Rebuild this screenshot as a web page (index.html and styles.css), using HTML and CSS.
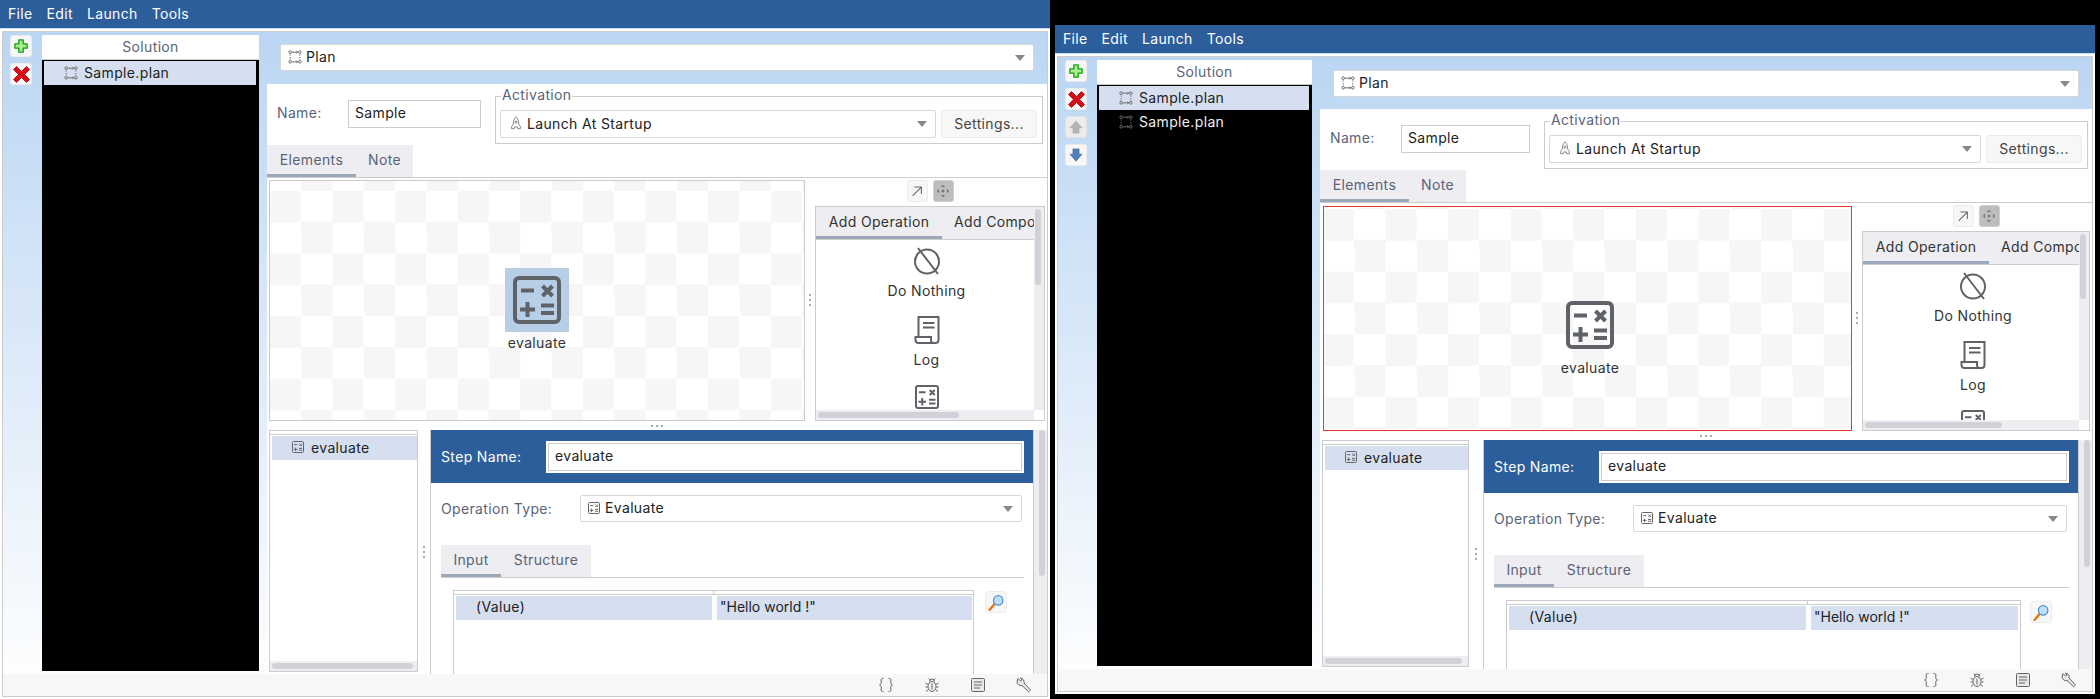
FILE: index.html

```html
<!DOCTYPE html>
<html lang="en">
<head>
  <meta charset="UTF-8">
  <title>Solution</title>
  <link rel="stylesheet" href="styles.css">
</head>
<body>

  <svg class="defs" xmlns="http://www.w3.org/2000/svg">
    <symbol id="i-plan" viewBox="0 0 16 16">
      <g fill="none" stroke="#6b6b6b" stroke-width="1.1">
        <circle cx="2.5" cy="2.5" r="1.5"/><circle cx="13.5" cy="2.5" r="1.5"/>
        <circle cx="2.5" cy="13.5" r="1.5"/><circle cx="13.5" cy="13.5" r="1.5"/>
        <path d="M4.5 2.5h6.5M9.5 1l1.5 1.5L9.5 4M4.5 13.5h6.5M9.5 12l1.5 1.5L9.5 15M2.5 5v1.5M2.5 8v1.5M2.5 10.5v.8M13.5 5v1.5M13.5 8v1.5M13.5 10.5v.8"/>
      </g>
    </symbol>
    <symbol id="i-calc" viewBox="0 0 48 48">
      <rect x="2" y="2" width="44" height="44" rx="4" fill="none" stroke="currentColor" stroke-width="4"/>
      <path d="M8 14.5h13M29.5 10l10 10M39.5 10l-10 10M14.5 26v15M7 33.5h15M28 29.5h13M28 37h13" fill="none" stroke="currentColor" stroke-width="4"/>
    </symbol>
    <symbol id="i-rocket" viewBox="0 0 16 16">
      <path d="M8 1c2.4 2 3 5 3 8l2 3v2.500h-3l-.5-2h-3l-.5 2H3V12l2-3c0-3 .6-6 3-8z" fill="none" stroke="#777" stroke-width="1"/>
      <circle cx="8" cy="7" r="1.200" fill="none" stroke="#777"/>
    </symbol>
    <symbol id="i-plus" viewBox="0 0 16 16">
      <path d="M5.500 1h5v4.500H15v5h-4.500V15h-5v-4.500H1v-5h4.500z" fill="#a4ec8c" stroke="#12a012" stroke-width="1.500" stroke-linejoin="round"/>
    </symbol>
    <symbol id="i-cross" viewBox="0 0 17 17">
      <path d="M3.500 .5L8.500 5.500 13.500 .5 16.500 3.500 11.500 8.500 16.500 13.500 13.500 16.500 8.500 11.500 3.500 16.500 .5 13.500 5.500 8.500 .5 3.500z" fill="#dc0a14" stroke="#a80010" stroke-width=".8"/>
    </symbol>
    <symbol id="i-up" viewBox="0 0 16 16">
      <path d="M8 1l7 8h-3.500v6h-7V9H1z" fill="#b4b4b4" stroke="#a8a8a8" stroke-width=".6"/>
    </symbol>
    <symbol id="i-down" viewBox="0 0 16 16">
      <path d="M4.500 1h7v6H15l-7 8-7-8h3.500z" fill="#4f7fbc" stroke="#2f5a96" stroke-width=".6"/>
    </symbol>
    <symbol id="i-link" viewBox="0 0 16 16">
      <path d="M3 13.500L13 3.500M5 3.500h8v8" fill="none" stroke="#666" stroke-width="1.200"/>
    </symbol>
    <symbol id="i-move" viewBox="0 0 16 16">
      <path d="M8 1l2.500 2.500h-5zM8 15l-2.500-2.500h5zM1 8l2.500-2.500v5zM15 8l-2.500 2.500v-5zM8 6l2 2-2 2-2-2z" fill="#777"/>
    </symbol>
    <symbol id="i-none" viewBox="0 0 28 28">
      <circle cx="14" cy="14.500" r="12" fill="none" stroke="#5f6368" stroke-width="2"/>
      <path d="M5 1l20 26" fill="none" stroke="#5f6368" stroke-width="2"/>
    </symbol>
    <symbol id="i-log" viewBox="0 0 25 28">
      <path d="M4 21V1h20v23a3 3 0 0 1-3 3H4a3 3 0 0 1-3-3v-3h15.500v3a3 3 0 0 0 4 3M8.500 7h11.500M8.500 11.500h11.500" fill="none" stroke="#5f6368" stroke-width="2"/>
    </symbol>
    <symbol id="i-search" viewBox="0 0 20 20">
      <path d="M2 18.500l6-7" fill="none" stroke="#e07a1c" stroke-width="3" stroke-linecap="round"/>
      <circle cx="12" cy="7.500" r="5.500" fill="#bfe0fa" stroke="#4f8fd0" stroke-width="1.500"/>
    </symbol>
    <symbol id="i-braces" viewBox="0 0 16 16">
      <path d="M5.500 1.500H4.500c-1 0-1.300.6-1.300 1.500v3c0 1-.6 1.700-1.700 2 1.100.3 1.700 1 1.700 2v3c0 .9.3 1.500 1.300 1.500h1M10.500 1.500h1c1 0 1.300.6 1.300 1.500v3c0 1 .6 1.700 1.700 2-1.100.3-1.700 1-1.700 2v3c0 .9-.3 1.500-1.300 1.500h-1" fill="none" stroke="#666" stroke-width="1"/>
    </symbol>
    <symbol id="i-bug" viewBox="0 0 16 16">
      <ellipse cx="8" cy="9.500" rx="4" ry="5" fill="#eee" stroke="#666"/>
      <path d="M5.500 4.500a2.500 2.500 0 0 1 5 0M5 1.500l1.500 2M11 1.500l-1.500 2M4 7.500L1.500 6M12 7.500L14.500 6M3.800 10H1.500M12.200 10h2.300M4.500 12.500l-2.500 2M11.500 12.500l2.500 2M8 6.500v6" fill="none" stroke="#666"/>
    </symbol>
    <symbol id="i-doc" viewBox="0 0 16 16">
      <rect x="1.500" y="1.500" width="13" height="13" rx="1" fill="#e8e8e8" stroke="#666"/>
      <path d="M4 5h8M4 8h8M4 11h6" fill="none" stroke="#666"/>
    </symbol>
    <symbol id="i-wrench" viewBox="0 0 16 16">
      <path d="M2 1.500L4.500 4 6 3 4.500 1a4 4 0 0 1 3.500 5l6.500 7-1.800 1.800L6 8.500A4 4 0 0 1 1 5z" fill="#e8e8e8" stroke="#666" stroke-linejoin="round"/>
    </symbol>
  </svg>

  <!-- first window -->
  <div class="window win-a">
    <div class="menubar">
      <span>File</span><span>Edit</span><span>Launch</span><span>Tools</span>
    </div>
    <div class="frame">
      <div class="columns">
        <div class="rail">
          <button class="tool"><svg class="ic14"><use href="#i-plus"/></svg></button>
          <button class="tool"><svg class="ic17"><use href="#i-cross"/></svg></button>
        </div>
        <div class="solution">
          <div class="solution-head">Solution</div>
          <div class="solution-list">
            <div class="plan-row selected"><svg class="ic14"><use href="#i-plan"/></svg>Sample.plan</div>
          </div>
        </div>
        <div class="pane">
          <div class="topbar">
            <div class="combo"><svg class="ic14"><use href="#i-plan"/></svg>Plan<i class="arrow"></i></div>
          </div>
          <div class="sheet">
            <div class="name-row">
              <span class="name-label">Name:</span>
              <div class="name-field">Sample</div>
              <fieldset class="activation">
                <legend>Activation</legend>
                <div class="activation-row">
                  <div class="combo"><svg class="ic14"><use href="#i-rocket"/></svg>Launch At Startup<i class="arrow"></i></div>
                  <button class="settings">Settings...</button>
                </div>
              </fieldset>
            </div>
            <div class="tabs">
              <span class="tab active tab-elements">Elements</span><span class="tab tab-note">Note</span>
            </div>
            <div class="editor">
              <div class="canvas">
                <div class="node selected-node">
                  <span class="node-icon"><svg class="ic48"><use href="#i-calc"/></svg></span>
                  <span class="node-label">evaluate</span>
                </div>
              </div>
              <div class="sash-v"><i class="grip-v"></i></div>
              <div class="palette-col">
                <div class="palette-tools">
                  <button class="tool small"><svg class="ic14"><use href="#i-link"/></svg></button>
                  <button class="tool small on"><svg class="ic14"><use href="#i-move"/></svg></button>
                </div>
                <div class="palette">
                  <div class="palette-body">
                    <div class="tabs palette-tabs">
                      <span class="tab active tab-op">Add Operation</span><span class="tab tab-comp">Add Compo</span>
                    </div>
                    <div class="palette-item"><svg class="ic28"><use href="#i-none"/></svg><span>Do Nothing</span></div>
                    <div class="palette-item"><svg class="ic28"><use href="#i-log"/></svg><span>Log</span></div>
                    <div class="palette-item"><svg class="ic24"><use href="#i-calc"/></svg></div>
                  </div>
                  <div class="vbar"><i class="thumb-v"></i></div>
                  <div class="hbar"><i class="thumb-h"></i></div>
                  <div class="corner"></div>
                </div>
              </div>
            </div>
            <div class="sash-h"><i class="grip-h"></i></div>
            <div class="lower">
              <div class="steps">
                <div class="steps-head"></div>
                <div class="steps-list">
                  <div class="step-row"><svg class="ic12"><use href="#i-calc"/></svg>evaluate</div>
                </div>
                <div class="hbar steps-bar"><i class="thumb-h"></i></div>
              </div>
              <div class="sash-v lower-sash"><i class="grip-v"></i></div>
              <div class="detail">
                <div class="step-head">
                  <span class="step-label">Step Name:</span>
                  <div class="step-field">evaluate</div>
                </div>
                <div class="op-row">
                  <span class="op-label">Operation Type:</span>
                  <div class="combo"><svg class="ic12"><use href="#i-calc"/></svg>Evaluate<i class="arrow"></i></div>
                </div>
                <div class="tabs detail-tabs">
                  <span class="tab active tab-input">Input</span><span class="tab tab-struct">Structure</span>
                </div>
                <div class="input-row">
                  <div class="grid">
                    <div class="grid-head"><i></i><i></i></div>
                    <div class="grid-row">
                      <span class="cell cell-key">(Value)</span>
                      <span class="cell cell-val">"Hello world !"</span>
                    </div>
                  </div>
                  <button class="tool"><svg class="ic17"><use href="#i-search"/></svg></button>
                </div>
              </div>
              <div class="detail-scroll"><i class="thumb-detail"></i></div>
            </div>
          </div>
        </div>
      </div>
      <div class="statusbar">
        <svg class="ic16"><use href="#i-braces"/></svg>
        <svg class="ic16"><use href="#i-bug"/></svg>
        <svg class="ic16"><use href="#i-doc"/></svg>
        <svg class="ic16"><use href="#i-wrench"/></svg>
      </div>
    </div>
  </div>

  <!-- second window -->
  <div class="window win-b">
    <div class="menubar">
      <span>File</span><span>Edit</span><span>Launch</span><span>Tools</span>
    </div>
    <div class="frame">
      <div class="columns">
        <div class="rail">
          <button class="tool"><svg class="ic14"><use href="#i-plus"/></svg></button>
          <button class="tool"><svg class="ic17"><use href="#i-cross"/></svg></button>
          <button class="tool off"><svg class="ic14"><use href="#i-up"/></svg></button>
          <button class="tool"><svg class="ic14"><use href="#i-down"/></svg></button>
        </div>
        <div class="solution">
          <div class="solution-head">Solution</div>
          <div class="solution-list">
            <div class="plan-row selected"><svg class="ic14"><use href="#i-plan"/></svg>Sample.plan</div>
            <div class="plan-row"><svg class="ic14"><use href="#i-plan"/></svg>Sample.plan</div>
          </div>
        </div>
        <div class="pane">
          <div class="topbar">
            <div class="combo"><svg class="ic14"><use href="#i-plan"/></svg>Plan<i class="arrow"></i></div>
          </div>
          <div class="sheet">
            <div class="name-row">
              <span class="name-label">Name:</span>
              <div class="name-field">Sample</div>
              <fieldset class="activation">
                <legend>Activation</legend>
                <div class="activation-row">
                  <div class="combo"><svg class="ic14"><use href="#i-rocket"/></svg>Launch At Startup<i class="arrow"></i></div>
                  <button class="settings">Settings...</button>
                </div>
              </fieldset>
            </div>
            <div class="tabs">
              <span class="tab active tab-elements">Elements</span><span class="tab tab-note">Note</span>
            </div>
            <div class="editor">
              <div class="canvas">
                <div class="node">
                  <span class="node-icon"><svg class="ic48"><use href="#i-calc"/></svg></span>
                  <span class="node-label">evaluate</span>
                </div>
              </div>
              <div class="sash-v"><i class="grip-v"></i></div>
              <div class="palette-col">
                <div class="palette-tools">
                  <button class="tool small"><svg class="ic14"><use href="#i-link"/></svg></button>
                  <button class="tool small on"><svg class="ic14"><use href="#i-move"/></svg></button>
                </div>
                <div class="palette">
                  <div class="palette-body">
                    <div class="tabs palette-tabs">
                      <span class="tab active tab-op">Add Operation</span><span class="tab tab-comp">Add Compo</span>
                    </div>
                    <div class="palette-item"><svg class="ic28"><use href="#i-none"/></svg><span>Do Nothing</span></div>
                    <div class="palette-item"><svg class="ic28"><use href="#i-log"/></svg><span>Log</span></div>
                    <div class="palette-item"><svg class="ic24"><use href="#i-calc"/></svg></div>
                  </div>
                  <div class="vbar"><i class="thumb-v"></i></div>
                  <div class="hbar"><i class="thumb-h"></i></div>
                  <div class="corner"></div>
                </div>
              </div>
            </div>
            <div class="sash-h"><i class="grip-h"></i></div>
            <div class="lower">
              <div class="steps">
                <div class="steps-head"></div>
                <div class="steps-list">
                  <div class="step-row"><svg class="ic12"><use href="#i-calc"/></svg>evaluate</div>
                </div>
                <div class="hbar steps-bar"><i class="thumb-h"></i></div>
              </div>
              <div class="sash-v lower-sash"><i class="grip-v"></i></div>
              <div class="detail">
                <div class="step-head">
                  <span class="step-label">Step Name:</span>
                  <div class="step-field">evaluate</div>
                </div>
                <div class="op-row">
                  <span class="op-label">Operation Type:</span>
                  <div class="combo"><svg class="ic12"><use href="#i-calc"/></svg>Evaluate<i class="arrow"></i></div>
                </div>
                <div class="tabs detail-tabs">
                  <span class="tab active tab-input">Input</span><span class="tab tab-struct">Structure</span>
                </div>
                <div class="input-row">
                  <div class="grid">
                    <div class="grid-head"><i></i><i></i></div>
                    <div class="grid-row">
                      <span class="cell cell-key">(Value)</span>
                      <span class="cell cell-val">"Hello world !"</span>
                    </div>
                  </div>
                  <button class="tool"><svg class="ic17"><use href="#i-search"/></svg></button>
                </div>
              </div>
              <div class="detail-scroll"><i class="thumb-detail"></i></div>
            </div>
          </div>
        </div>
      </div>
      <div class="statusbar">
        <svg class="ic16"><use href="#i-braces"/></svg>
        <svg class="ic16"><use href="#i-bug"/></svg>
        <svg class="ic16"><use href="#i-doc"/></svg>
        <svg class="ic16"><use href="#i-wrench"/></svg>
      </div>
    </div>
  </div>

</body>
</html>
```

FILE: styles.css

```css
* {
  box-sizing: border-box;
}
body {
  margin: 0;
  height: 699px;
  overflow: hidden;
  display: flex;
  align-items: flex-start;
  background: #000;
  font-family: Inter, "Noto Sans", sans-serif;
  font-size: 14px;
  letter-spacing: 0.35px;
  color: #222;
}
button {
  font: inherit;
  letter-spacing: inherit;
  padding: 0;
}
svg {
  display: block;
  flex: none;
}
i {
  display: block;
}
.defs {
  display: none;
}
.ic12 { width: 12px; height: 12px; color: #666; }
.ic14 { width: 14px; height: 14px; }
.ic16 { width: 16px; height: 16px; }
.ic17 { width: 17px; height: 17px; }
.ic24 { width: 24px; height: 24px; color: #5f6368; }
.ic28 { width: 28px; height: 28px; }
.ic48 { width: 48px; height: 48px; color: #5f6368; }

/* windows */
.window {
  display: flex;
  flex-direction: column;
  flex: none;
  background: #fff;
}
.win-a {
  width: 1050px;
  height: 699px;
  --sol-w: 217px;
  --name-w: 133px;
  --canvas-w: 536px;
  --pad-l: 2px;
  --edit-gap: 2px;
  --edit-h: 241px;
  --item-pad: 3px;
  --thumb-v: 76px;
  --thumb-h: 141px;
  --steps-w: 149px;
  --sash-w: 12px;
  --detail-w: 604px;
  --thumb-d: 146px;
  --key-w: 256px;
  --val-w: 255px;
  --grid-gap: 11px;
}
.win-b {
  width: 1040px;
  height: 669px;
  margin-left: 5px;
  margin-top: 25px;
  --sol-w: 215px;
  --name-w: 129px;
  --canvas-w: 529px;
  --pad-l: 3px;
  --edit-gap: 3px;
  --edit-h: 225px;
  --item-pad: 4px;
  --thumb-v: 65px;
  --thumb-h: 137px;
  --steps-w: 147px;
  --sash-w: 14px;
  --detail-w: 596px;
  --thumb-d: 127px;
  --key-w: 297px;
  --val-w: 207px;
  --grid-gap: 9px;
}
.menubar {
  height: 29px;
  flex: none;
  display: flex;
  align-items: center;
  gap: 14px;
  padding: 0 8px 1px;
  background: #2c5e9b;
  border-bottom: 1px solid #c9ddf4;
  color: #fff;
}
.frame {
  flex: 1;
  min-height: 0;
  display: flex;
  flex-direction: column;
  margin: 2px 2px 2px;
  border: 1px solid #ccc;
  background: linear-gradient(#bbd6f3, #fff);
}
.columns {
  flex: 1;
  min-height: 0;
  display: flex;
}
.statusbar {
  flex: none;
  height: 22px;
  display: flex;
  justify-content: flex-end;
  align-items: center;
  gap: 30px;
  padding-right: 15px;
  background: #f7f7f7;
}

/* left rail */
.rail {
  flex: none;
  width: 39px;
  padding: 3px 0 0 7px;
  display: flex;
  flex-direction: column;
  gap: 6px;
}
.tool {
  width: 22px;
  height: 22px;
  display: flex;
  align-items: center;
  justify-content: center;
  background: #f7f7f7;
  border: 1px solid #ececec;
  border-radius: 3px;
}
.tool.off {
  background: #ececec;
  border-color: #e2e2e2;
}
.tool.on {
  background: #bdbdbd;
  border-color: #cfcfcf;
}

/* solution tree */
.solution {
  flex: none;
  width: var(--sol-w);
  margin: 3px 8px 3px 0;
  display: flex;
  flex-direction: column;
}
.solution-head {
  flex: none;
  height: 25px;
  line-height: 24px;
  text-align: center;
  background: #fff;
  border-bottom: 1px solid #ccc;
  color: #5a6478;
}
.solution-list {
  flex: 1;
  background: #000;
  padding: 1px 3px 0 2px;
  color: #eee;
}
.plan-row {
  height: 24px;
  display: flex;
  align-items: center;
  gap: 6px;
  padding: 0 0 1px 20px;
}
.plan-row.selected {
  background: #d5dff0;
  color: #222;
}

/* main pane */
.pane {
  flex: 1;
  min-width: 0;
  display: flex;
  flex-direction: column;
}
.topbar {
  flex: none;
  padding: 12px 13px 13px;
}
.win-b .topbar {
  padding: 13px 13px 12px;
}
.combo {
  display: flex;
  align-items: center;
  gap: 4px;
  height: 27px;
  padding: 0 8px 2px 7px;
  background: #fff;
  border: 1px solid #d8d8d8;
  border-radius: 2px;
  color: #222;
  white-space: nowrap;
}
.arrow {
  margin-left: auto;
  margin-top: 2px;
  border-left: 5px solid transparent;
  border-right: 5px solid transparent;
  border-top: 6px solid #888;
}
.sheet {
  flex: 1;
  min-height: 0;
  display: flex;
  flex-direction: column;
  background: #fff;
}
.name-row {
  flex: none;
  height: 61px;
  display: flex;
  align-items: flex-start;
  padding: 5px 4px 0 10px;
}
.name-label {
  flex: none;
  width: 71px;
  margin-top: 10px;
  line-height: 28px;
  color: #5a6478;
}
.name-field {
  flex: none;
  width: var(--name-w);
  height: 28px;
  margin-top: 11px;
  padding-left: 6px;
  line-height: 24px;
  border: 1px solid #ccc;
  color: #222;
}
.activation {
  flex: 1;
  min-width: 0;
  margin: 0 0 0 14px;
  padding: 7px 5px 5px 4px;
  border: 1px solid #ccc;
}
.activation legend {
  margin-left: 1px;
  padding: 0 1px;
  line-height: 12px;
  height: 14px;
  color: #5a6478;
}
.activation-row {
  display: flex;
  gap: 5px;
}
.activation-row .combo {
  flex: 1;
  height: 28px;
  min-width: 0;
  padding-left: 8px;
}
.settings {
  flex: none;
  width: 96px;
  height: 28px;
  padding-bottom: 2px;
  background: #f7f7f7;
  border: 1px solid #ececec;
  border-radius: 3px;
  color: #444;
}

/* tabs */
.tabs {
  flex: none;
  display: flex;
  height: 33px;
  border-bottom: 1px solid #ccc;
  color: #5a6478;
}
.tab {
  flex: none;
  display: block;
  height: 32px;
  line-height: 29px;
  text-align: center;
  background: #ededf2;
}
.tab.active {
  box-shadow: inset 0 -3px #9aa8ba;
}
.tab-elements { width: 89px; }
.tab-note { width: 57px; }
.tab-op { width: 126px; color: #333; }
.tab-comp { width: 126px; padding-left: 12px; text-align: left; color: #333; white-space: nowrap; }
.tab-input { width: 60px; }
.tab-struct { width: 90px; }

/* editor */
.editor {
  flex: none;
  display: flex;
  height: var(--edit-h);
  margin-top: var(--edit-gap);
  padding: 0 2px 0 var(--pad-l);
}
.canvas {
  flex: none;
  position: relative;
  width: var(--canvas-w);
  border: 1px solid #ccc;
  background: repeating-conic-gradient(#fff 0 25%, #f6f6f6 0 50%) 0 10px / 62.6px 62.6px;
  overflow: hidden;
}
.win-b .canvas {
  border-color: #e8372c;
  background-position: -1px 2px;
}
.node {
  position: absolute;
  left: 234px;
  top: 86px;
  width: 64px;
  display: flex;
  flex-direction: column;
  align-items: center;
}
.win-a .node {
  left: 235px;
  top: 87px;
}
.node-icon {
  display: block;
  width: 64px;
  height: 64px;
  padding: 8px;
}
.selected-node .node-icon {
  background: #b6cee6;
}
.node-label {
  margin-top: 1px;
  line-height: 20px;
  color: #333;
}
.sash-v {
  flex: none;
  width: 10px;
  display: flex;
  align-items: center;
  justify-content: center;
}
.grip-v {
  width: 2px;
  height: 13px;
  background: repeating-linear-gradient(#aaa 0 2px, transparent 2px 5px);
}
.sash-h {
  flex: none;
  height: 9px;
  display: flex;
  align-items: center;
  justify-content: center;
}
.grip-h {
  width: 12px;
  height: 2px;
  background: repeating-linear-gradient(90deg, #aaa 0 2px, transparent 2px 5px);
}

/* palette */
.palette-col {
  flex: 1;
  min-width: 0;
  display: flex;
  flex-direction: column;
}
.palette-tools {
  flex: none;
  display: flex;
  justify-content: center;
  gap: 5px;
  height: 26px;
}
.win-b .palette-tools {
  margin-top: -1px;
}
.tool.small {
  width: 21px;
}
.palette {
  flex: 1;
  min-height: 0;
  display: grid;
  grid-template-columns: 1fr 10px;
  grid-template-rows: 1fr 10px;
  border: 1px solid #ccc;
  overflow: hidden;
}
.palette-body {
  min-width: 0;
  min-height: 0;
  overflow: hidden;
  text-align: center;
}
.palette-tabs {
  overflow: hidden;
}
.palette-item {
  display: flex;
  flex-direction: column;
  align-items: center;
  height: 69px;
  padding: 7px 0 0 var(--item-pad);
  color: #333;
}
.palette-item span {
  margin-top: 6px;
  line-height: 20px;
}
.vbar {
  background: #ededf2;
  padding: 2px 3px 0 1px;
}
.thumb-v {
  width: 6px;
  height: var(--thumb-v);
  border-radius: 3px;
  background: #d0d2d8;
}
.hbar {
  background: #ededf2;
  padding: 2px 0 0 2px;
}
.thumb-h {
  width: var(--thumb-h);
  height: 6px;
  border-radius: 3px;
  background: #d0d2d8;
}
.corner {
  background: #fff;
}

/* lower half */
.lower {
  flex: 1;
  min-height: 0;
  display: flex;
  padding-left: var(--pad-l);
  overflow: hidden;
}
.win-b .lower {
  padding-left: 2px;
}
.steps {
  flex: none;
  width: var(--steps-w);
  margin-bottom: 2px;
  display: flex;
  flex-direction: column;
  border: 1px solid #ccc;
}
.steps-head {
  flex: none;
  height: 4px;
  border-bottom: 1px solid #ccc;
}
.steps-list {
  flex: 1;
  padding: 1px 0 0 2px;
}
.step-row {
  height: 24px;
  display: flex;
  align-items: center;
  gap: 7px;
  padding: 0 0 2px 20px;
  background: #d5dff0;
  color: #222;
}
.steps-bar {
  flex: none;
  height: 10px;
}
.lower-sash {
  width: var(--sash-w);
}
.detail {
  flex: none;
  width: var(--detail-w);
  border-left: 1px solid #ccc;
  border-right: 1px solid #ccc;
  overflow: hidden;
}
.step-head {
  height: 53px;
  display: flex;
  align-items: center;
  padding: 0 9px 0 10px;
  background: #2c5e9b;
  color: #fff;
}
.step-label {
  flex: none;
  width: 105px;
}
.step-field {
  flex: 1;
  height: 32px;
  padding-left: 7px;
  line-height: 26px;
  background: #fff;
  border: 2px solid #fff;
  box-shadow: inset 0 0 0 1px #ccc;
  color: #222;
}
.op-row {
  display: flex;
  align-items: center;
  margin: 12px 11px 0 10px;
}
.op-label {
  flex: none;
  width: 139px;
  color: #5a6478;
}
.op-row .combo {
  flex: 1;
  min-width: 0;
  gap: 5px;
}
.detail-tabs {
  margin: 23px 9px 0 10px;
}
.input-row {
  display: flex;
  align-items: flex-start;
  gap: var(--grid-gap);
  margin-top: 12px;
  padding: 0 26px 0 22px;
}
.input-row .tool {
  flex: none;
  margin-top: 1px;
}
.grid {
  flex: 1;
  min-width: 0;
  height: 200px;
  border: 1px solid #ccc;
}
.grid-head {
  display: flex;
  height: 4px;
  border-bottom: 1px solid #ccc;
}
.grid-head i {
  flex: none;
  width: calc(var(--key-w) + 4px);
  border-right: 1px solid #ccc;
}
.grid-row {
  display: flex;
  gap: 5px;
  padding: 1px 2px 0;
}
.cell {
  flex: none;
  height: 24px;
  line-height: 22px;
  background: #d5dff0;
}
.cell-key {
  width: var(--key-w);
  padding-left: 20px;
}
.cell-val {
  width: var(--val-w);
  padding-left: 3px;
  letter-spacing: 0;
}
.detail-scroll {
  flex: 1;
  background: #ededf2;
  padding-left: 5px;
}
.thumb-detail {
  width: 6px;
  height: var(--thumb-d);
  border-radius: 3px;
  background: #d0d2d8;
}
```
